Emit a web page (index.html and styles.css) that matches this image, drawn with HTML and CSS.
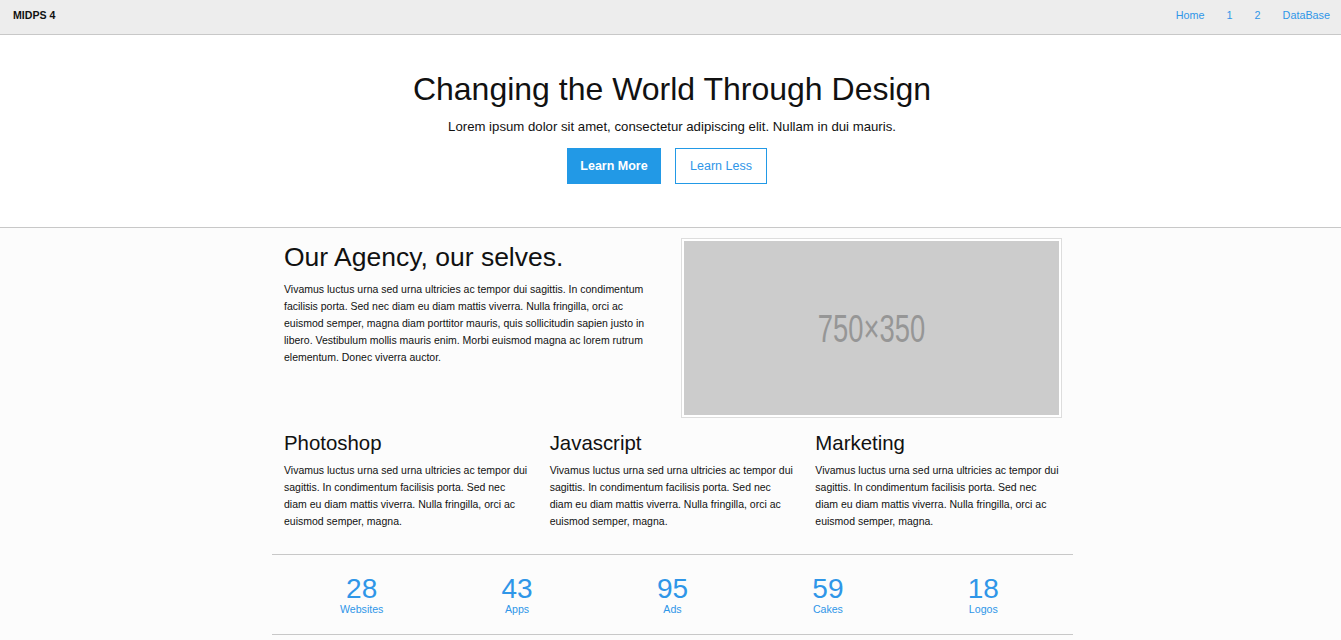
FILE: index.html
```html
<!DOCTYPE html>
<html lang="en">
<head>
<meta charset="utf-8">
<title>MIDPS 4</title>
<link rel="stylesheet" href="styles.css">
</head>
<body>
<nav class="navbar">
  <a class="brand" href="#">MIDPS 4</a>
  <ul class="nav-links">
    <li><a href="#">Home</a></li>
    <li><a href="#">1</a></li>
    <li><a href="#">2</a></li>
    <li><a href="#">DataBase</a></li>
  </ul>
</nav>
<header class="hero">
  <h1 class="hero-title">Changing the World Through Design</h1>
  <p class="hero-text">Lorem ipsum dolor sit amet, consectetur adipiscing elit. Nullam in dui mauris.</p>
  <div class="hero-actions">
    <a class="btn btn-primary" href="#">Learn More</a>
    <a class="btn btn-outline" href="#">Learn Less</a>
  </div>
</header>
<main class="main">
  <div class="container">
    <section class="agency">
      <div class="agency-text">
        <h2 class="agency-title">Our Agency, our selves.</h2>
        <p class="body-text">Vivamus luctus urna sed urna ultricies ac tempor dui sagittis. In condimentum facilisis porta. Sed nec diam eu diam mattis viverra. Nulla fringilla, orci ac euismod semper, magna diam porttitor mauris, quis sollicitudin sapien justo in libero. Vestibulum mollis mauris enim. Morbi euismod magna ac lorem rutrum elementum. Donec viverra auctor.</p>
      </div>
      <div class="thumb">
        <div class="placeholder"><span class="placeholder-text">750×350</span></div>
      </div>
    </section>
    <section class="features">
      <div class="feature">
        <h3 class="feature-title">Photoshop</h3>
        <p class="body-text">Vivamus luctus urna sed urna ultricies ac tempor dui sagittis. In condimentum facilisis porta. Sed nec diam eu diam mattis viverra. Nulla fringilla, orci ac euismod semper, magna.</p>
      </div>
      <div class="feature">
        <h3 class="feature-title">Javascript</h3>
        <p class="body-text">Vivamus luctus urna sed urna ultricies ac tempor dui sagittis. In condimentum facilisis porta. Sed nec diam eu diam mattis viverra. Nulla fringilla, orci ac euismod semper, magna.</p>
      </div>
      <div class="feature">
        <h3 class="feature-title">Marketing</h3>
        <p class="body-text">Vivamus luctus urna sed urna ultricies ac tempor dui sagittis. In condimentum facilisis porta. Sed nec diam eu diam mattis viverra. Nulla fringilla, orci ac euismod semper, magna.</p>
      </div>
    </section>
    <section class="stats">
      <div class="stat"><span class="stat-num">28</span><span class="stat-label">Websites</span></div>
      <div class="stat"><span class="stat-num">43</span><span class="stat-label">Apps</span></div>
      <div class="stat"><span class="stat-num">95</span><span class="stat-label">Ads</span></div>
      <div class="stat"><span class="stat-num">59</span><span class="stat-label">Cakes</span></div>
      <div class="stat"><span class="stat-num">18</span><span class="stat-label">Logos</span></div>
    </section>
  </div>
</main>
</body>
</html>
```
FILE: styles.css
```css
* { box-sizing: border-box; }
html, body { margin: 0; padding: 0; }
body {
  font-family: "Liberation Sans", Arial, sans-serif;
  color: #111;
  background: #fcfcfc;
}
a { text-decoration: none; }

.navbar {
  height: 35px;
  background: #ededed;
  border-bottom: 1px solid #c8c8c8;
  display: flex;
  align-items: center;
  justify-content: space-between;
  padding: 0 11px 0 13px;
}
.brand {
  font-size: 10.6px;
  font-weight: bold;
  color: #111;
  margin-top: -4px;
}
.nav-links {
  list-style: none;
  margin: -4px 0 0;
  padding: 0;
  display: flex;
}
.nav-links a {
  display: block;
  font-size: 10.8px;
  color: #2f96e8;
  padding: 0 11px;
}
.nav-links li:last-child a { padding-right: 0; }

.hero {
  background: #fff;
  border-bottom: 1px solid #c8c8c8;
  text-align: center;
  padding: 36px 0 0 3px;
  height: 193px;
}
.hero-title {
  font-size: 32px;
  font-weight: normal;
  margin: 0;
  line-height: 36px;
}
.hero-text {
  font-size: 13.2px;
  margin: 10px 0 0;
  line-height: 20px;
}
.hero-actions {
  display: flex;
  justify-content: center;
  gap: 14px;
  margin-top: 11px;
  padding-right: 10px;
}
.btn {
  display: inline-flex;
  align-items: center;
  justify-content: center;
  height: 36px;
  font-size: 12.5px;
  white-space: nowrap;
}
.btn-primary {
  background: #2299e6;
  color: #fff;
  font-weight: bold;
  width: 94px;
}
.btn-outline {
  background: #fff;
  color: #2f96e8;
  border: 1px solid #2299e6;
  width: 92px;
}

.main { padding-left: 4px; }
.container {
  width: 801px;
  margin: 0 auto;
}
.agency {
  display: grid;
  grid-template-columns: 1fr 381px;
  gap: 19px;
  padding: 10px 11px 0 12px;
}
.agency-title {
  font-size: 26.5px;
  font-weight: normal;
  margin: 4px 0 0;
  line-height: 30px;
}
.body-text {
  font-size: 10.5px;
  line-height: 17px;
  margin: 9px 0 0;
}
.thumb {
  border: 1px solid #ddd;
  padding: 2px;
  background: #fff;
  height: 180px;
}
.placeholder {
  background: #cccccc;
  height: 100%;
  display: flex;
  align-items: center;
  justify-content: center;
  color: #969696;
  padding-top: 2px;
}
.placeholder-text {
  font-family: "Liberation Sans", sans-serif;
  font-size: 38px;
  display: inline-block;
  transform: scaleX(0.72);
}

.features {
  display: grid;
  grid-template-columns: repeat(3, 1fr);
  gap: 20px;
  padding: 13px 12px 0;
}
.feature-title {
  font-size: 20.4px;
  font-weight: normal;
  margin: 0;
  line-height: 24px;
}
.feature .body-text { margin-top: 7px; }

.stats {
  margin-top: 24px;
  border-top: 1px solid #c8c8c8;
  border-bottom: 1px solid #c8c8c8;
  display: grid;
  grid-template-columns: repeat(5, 1fr);
  padding: 20px 12px 0;
  height: 81px;
}
.stat {
  display: flex;
  flex-direction: column;
  align-items: center;
  color: #2f96e8;
}
.stat-num {
  font-size: 28px;
  line-height: 28px;
}
.stat-label {
  font-size: 10.6px;
  line-height: 12px;
}
```
